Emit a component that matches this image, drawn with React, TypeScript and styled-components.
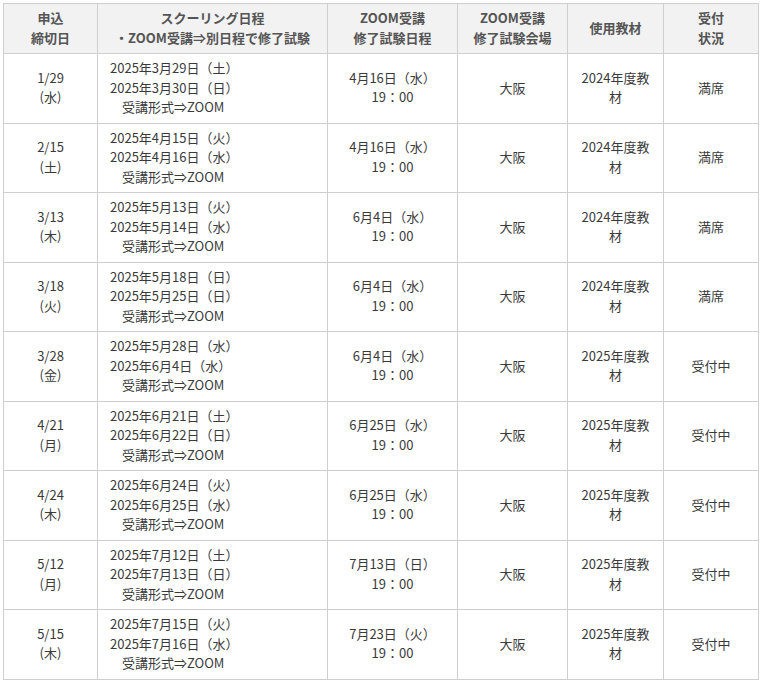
import styled, { createGlobalStyle } from "styled-components";

const GlobalStyle = createGlobalStyle`
  body {
    margin: 0;
    background: #fff;
    font-family: "Noto Sans CJK JP", "Noto Sans", sans-serif;
    color: #3a3a3a;
  }
`;

type Course = {
  deadline: string;
  weekday: string;
  day1: string;
  day2: string;
  examDate: string;
  examTime: string;
  place: string;
  book: string;
  status: string;
};

const courses: Course[] = [
  { deadline: "1/29", weekday: "(水)", day1: "2025年3月29日（土）", day2: "2025年3月30日（日）", examDate: "4月16日（水）", examTime: "19：00", place: "大阪", book: "2024年度教材", status: "満席" },
  { deadline: "2/15", weekday: "(土)", day1: "2025年4月15日（火）", day2: "2025年4月16日（水）", examDate: "4月16日（水）", examTime: "19：00", place: "大阪", book: "2024年度教材", status: "満席" },
  { deadline: "3/13", weekday: "(木)", day1: "2025年5月13日（火）", day2: "2025年5月14日（水）", examDate: "6月4日（水）", examTime: "19：00", place: "大阪", book: "2024年度教材", status: "満席" },
  { deadline: "3/18", weekday: "(火)", day1: "2025年5月18日（日）", day2: "2025年5月25日（日）", examDate: "6月4日（水）", examTime: "19：00", place: "大阪", book: "2024年度教材", status: "満席" },
  { deadline: "3/28", weekday: "(金)", day1: "2025年5月28日（水）", day2: "2025年6月4日（水）", examDate: "6月4日（水）", examTime: "19：00", place: "大阪", book: "2025年度教材", status: "受付中" },
  { deadline: "4/21", weekday: "(月)", day1: "2025年6月21日（土）", day2: "2025年6月22日（日）", examDate: "6月25日（水）", examTime: "19：00", place: "大阪", book: "2025年度教材", status: "受付中" },
  { deadline: "4/24", weekday: "(木)", day1: "2025年6月24日（火）", day2: "2025年6月25日（水）", examDate: "6月25日（水）", examTime: "19：00", place: "大阪", book: "2025年度教材", status: "受付中" },
  { deadline: "5/12", weekday: "(月)", day1: "2025年7月12日（土）", day2: "2025年7月13日（日）", examDate: "7月13日（日）", examTime: "19：00", place: "大阪", book: "2025年度教材", status: "受付中" },
  { deadline: "5/15", weekday: "(木)", day1: "2025年7月15日（火）", day2: "2025年7月16日（水）", examDate: "7月23日（火）", examTime: "19：00", place: "大阪", book: "2025年度教材", status: "受付中" },
];

const colWidths = [94, 230, 130, 110, 96, 95];

export default function App() {
  return (
    <>
      <GlobalStyle />
      <Page>
        <Table>
          <colgroup>
            {colWidths.map((w, i) => (
              <col key={i} style={{ width: w }} />
            ))}
          </colgroup>
          <thead>
            <tr>
              <Th>申込<br />締切日</Th>
              <Th>スクーリング日程<br />・ZOOM受講⇒別日程で修了試験</Th>
              <Th>ZOOM受講<br />修了試験日程</Th>
              <Th>ZOOM受講<br />修了試験会場</Th>
              <Th>使用教材</Th>
              <Th>受付<br />状況</Th>
            </tr>
          </thead>
          <tbody>
            {courses.map((c) => (
              <tr key={c.deadline}>
                <Td>{c.deadline}<br />{c.weekday}</Td>
                <Td align="left">
                  {c.day1}
                  <br />
                  {c.day2}
                  <br />
                  <Indent>受講形式⇒ZOOM</Indent>
                </Td>
                <Td>{c.examDate}<br />{c.examTime}</Td>
                <Td>{c.place}</Td>
                <Td $narrow>{c.book}</Td>
                <Td>{c.status}</Td>
              </tr>
            ))}
          </tbody>
        </Table>
      </Page>
    </>
  );
}

const Page = styled.div`
  padding: 3px;
`;

const Table = styled.table`
  width: 755px;
  border-collapse: collapse;
  table-layout: fixed;
  font-size: 13px;
  line-height: 19.5px;
`;

const Th = styled.th`
  background: #f2f2f2;
  border: 1px solid #cfcfcf;
  color: #555;
  font-weight: bold;
  text-align: center;
  vertical-align: middle;
  padding: 4px 4px 6px;
`;

type TdProps = {
  align?: "left" | "center";
  $narrow?: boolean;
};

const Td = styled.td<TdProps>`
  border: 1px solid #cfcfcf;
  text-align: ${({ align }) => align || "center"};
  vertical-align: middle;
  padding: ${({ align, $narrow }) =>
    align === "left" ? "4px 8px 6px 12px" : $narrow ? "4px 10px 6px" : "4px 4px 6px"};
  word-break: break-all;
`;

const Indent = styled.span`
  padding-left: 12px;
`;
